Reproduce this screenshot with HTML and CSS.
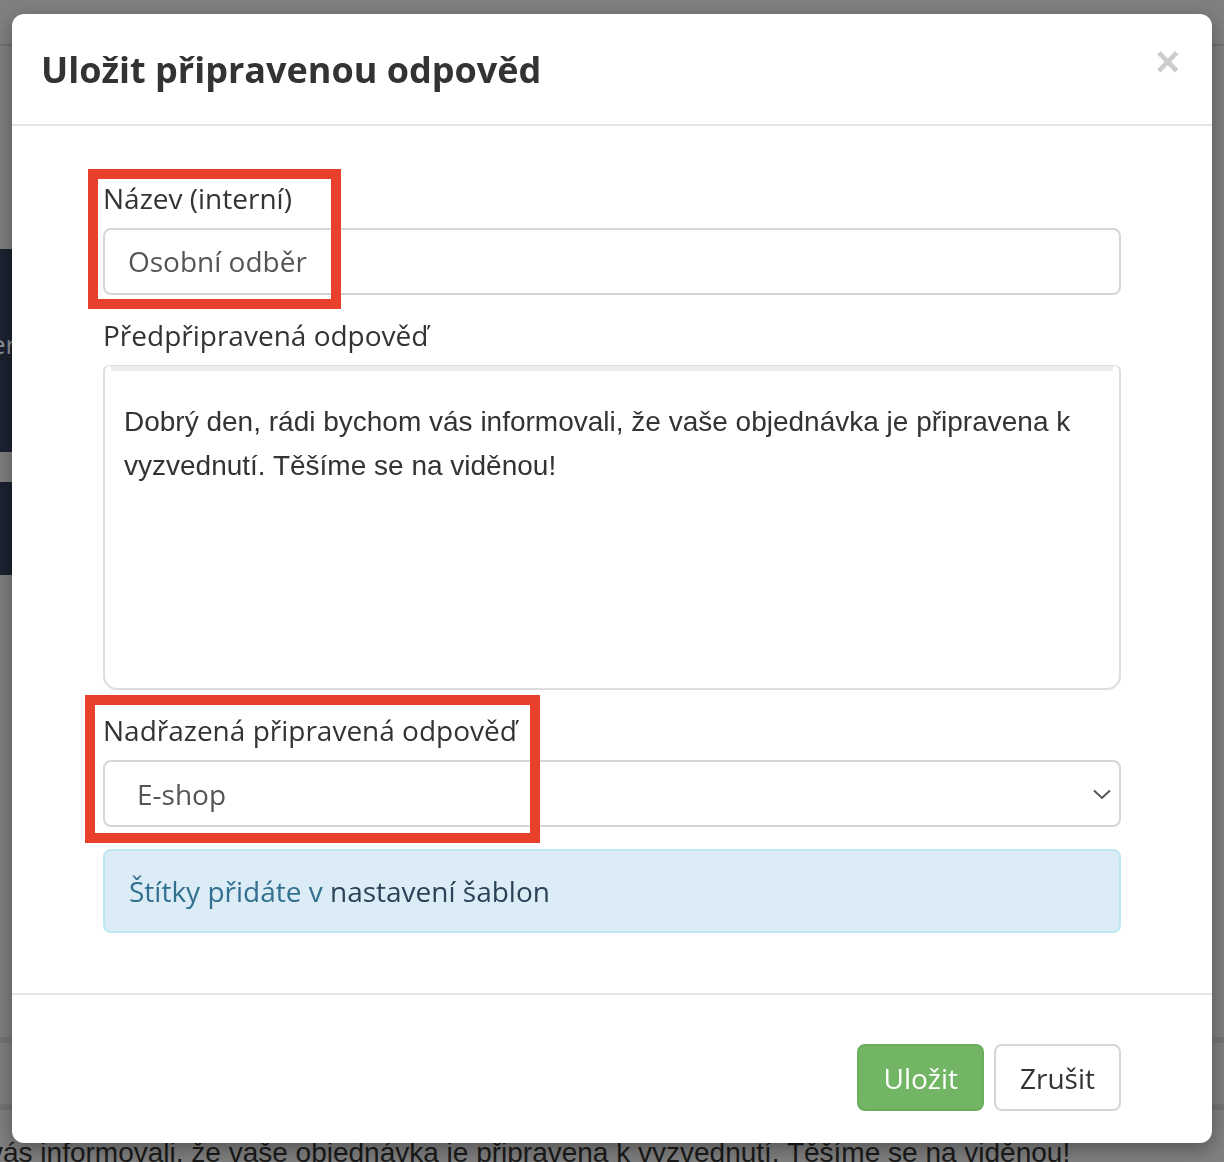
FILE: index.html
```html
<!DOCTYPE html>
<html lang="cs">
<head>
<meta charset="utf-8">
<title>Uložit připravenou odpověd</title>
<link rel="stylesheet" href="styles.css">
</head>
<body>
<div class="page">
  <div class="topbar"></div>
  <div class="spacer-a"></div>
  <div class="nav-block nav-block-tall"><span class="nav-text">er</span></div>
  <div class="nav-gap"></div>
  <div class="nav-block nav-block-short"></div>
  <div class="spacer-b"></div>
  <div class="page-line"></div>
  <div class="spacer-c"></div>
  <div class="page-line"></div>
  <div class="spacer-d"></div>
  <div class="page-text">vás informovali, že vaše objednávka je připravena k vyzvednutí. Těšíme se na viděnou!</div>
</div>

<div class="modal">
  <div class="modal-header">
    <h4 class="modal-title">Uložit připravenou odpověd</h4>
    <button class="close" type="button">×</button>
  </div>
  <div class="modal-body">
    <div class="form-group">
      <label class="label">Název (interní)</label>
      <div class="input">Osobní odběr</div>
      <div class="mark mark-1"></div>
    </div>
    <div class="form-group">
      <label class="label">Předpřipravená odpověď</label>
      <div class="editor">
        <div class="editor-band"></div>
        <div class="editor-content">Dobrý den, rádi bychom vás informovali, že vaše objednávka je připravena k vyzvednutí. Těšíme se na viděnou!</div>
      </div>
    </div>
    <div class="form-group">
      <label class="label">Nadřazená připravená odpověď</label>
      <div class="select">
        <span class="select-value">E-shop</span>
        <svg class="chevron" width="18" height="11" viewBox="0 0 18 11"><path d="M1 1.5 L9 9 L17 1.5" fill="none" stroke="#555" stroke-width="2"/></svg>
      </div>
      <div class="mark mark-2"></div>
    </div>
    <div class="alert">Štítky přidáte v <a class="alert-link">nastavení šablon</a></div>
  </div>
  <div class="modal-footer">
    <button class="btn btn-success" type="button">Uložit</button>
    <button class="btn btn-default" type="button">Zrušit</button>
  </div>
</div>
</body>
</html>
```

FILE: styles.css
```css
html, body {
  margin: 0;
  padding: 0;
}
body {
  background: #808080;
  width: 1224px;
  height: 1162px;
  overflow: hidden;
  font-family: "Open Sans", "Liberation Sans", sans-serif;
}

/* dimmed page behind the modal */
.page {
  display: flex;
  flex-direction: column;
  height: 1162px;
}
.topbar {
  height: 44px;
  border-bottom: 2px solid #737373;
  flex: none;
}
.spacer-a { height: 203px; flex: none; }
.nav-block {
  background: #1c2230;
  flex: none;
  width: 12px;
  overflow: hidden;
}
.nav-block-tall {
  height: 203px;
  display: flex;
  align-items: center;
}
.nav-text {
  color: #8f939b;
  font-size: 26px;
  margin-left: -9px;
  margin-top: -14px;
  white-space: nowrap;
}
.nav-gap { height: 30px; flex: none; }
.nav-block-short { height: 93px; }
.spacer-b { height: 462px; flex: none; }
.page-line {
  height: 6px;
  background: #747474;
  flex: none;
}
.spacer-c { height: 61px; flex: none; }
.spacer-d { height: 27px; flex: none; }
.page-text {
  font-family: "Liberation Sans", Arial, sans-serif;
  font-size: 28px;
  line-height: 32px;
  color: #1a1a1a;
  white-space: nowrap;
  margin-left: -11px;
  flex: none;
}

/* modal */
.modal {
  position: fixed;
  left: 12px;
  top: 14px;
  width: 1200px;
  height: 1129px;
  background: #fff;
  border-radius: 12px;
  box-shadow: 0 6px 20px rgba(0, 0, 0, 0.35);
  display: flex;
  flex-direction: column;
  color: #333;
}
.modal-header {
  display: flex;
  align-items: flex-start;
  padding: 30px 32px 29px 29px;
  border-bottom: 2px solid #e5e5e5;
}
.modal-title {
  margin: 0;
  font-size: 36px;
  line-height: 51px;
  font-weight: 700;
  color: #333;
}
.close {
  margin-left: auto;
  background: none;
  border: 0;
  padding: 0;
  font-family: "Liberation Sans", Arial, sans-serif;
  font-size: 42px;
  font-weight: 700;
  line-height: 42px;
  color: #cccccc;
  margin-top: -3px;
}

.modal-body {
  padding: 52px 91px 0 91px;
  height: 867px;
  box-sizing: border-box;
  flex: none;
}
.form-group {
  position: relative;
  margin-bottom: 20px;
}
.label {
  display: block;
  font-size: 28px;
  line-height: 40px;
  margin-bottom: 10px;
  color: #333;
}
.input {
  height: 67px;
  box-sizing: border-box;
  border: 2px solid #d6d6d6;
  border-radius: 8px;
  padding: 0 23px;
  font-size: 28px;
  line-height: 63px;
  color: #555;
}

/* red annotation frames */
.mark {
  position: absolute;
  border: 10px solid #e8402a;
  box-sizing: border-box;
  pointer-events: none;
}
.mark-1 {
  left: -15px;
  top: -9px;
  width: 253px;
  height: 140px;
}
.mark-2 {
  left: -18px;
  top: -15px;
  width: 455px;
  height: 148px;
}

.editor {
  height: 325px;
  box-sizing: border-box;
  border: 2px solid #dddddd;
  border-top-width: 1px;
  border-radius: 6px 6px 14px 14px;
  overflow: hidden;
}
.editor-band {
  height: 5px;
  background: #eeeeee;
  margin: 0 6px;
}
.editor-content {
  padding: 29px 19px 0 19px;
  font-family: "Liberation Sans", Arial, sans-serif;
  font-size: 28px;
  line-height: 44px;
  color: #333;
}

.select {
  height: 67px;
  box-sizing: border-box;
  border: 2px solid #d6d6d6;
  border-radius: 8px;
  padding: 0 8px 0 32px;
  display: flex;
  align-items: center;
  font-size: 28px;
  color: #555;
}
.select-value {
  line-height: 40px;
}
.chevron {
  margin-left: auto;
  margin-top: 2px;
}

.alert {
  margin-top: 22px;
  height: 84px;
  box-sizing: border-box;
  border: 2px solid #bce8f1;
  border-radius: 8px;
  background: #dcecf7;
  padding: 0 24px;
  font-size: 28px;
  line-height: 80px;
  color: #31708f;
}
.alert-link {
  color: #2b4257;
}

.modal-footer {
  border-top: 2px solid #e5e5e5;
  display: flex;
  justify-content: flex-end;
  gap: 10px;
  padding: 49px 91px 0 0;
}
.btn {
  height: 67px;
  box-sizing: border-box;
  border-radius: 8px;
  font-family: "Open Sans", "Liberation Sans", sans-serif;
  font-size: 28px;
  line-height: 40px;
  padding: 0 24px;
}
.btn-success {
  background: #72b665;
  border: 2px solid #6aae5d;
  color: #fff;
}
.btn-default {
  background: #fff;
  border: 2px solid #d6d6d6;
  color: #333;
}
```
